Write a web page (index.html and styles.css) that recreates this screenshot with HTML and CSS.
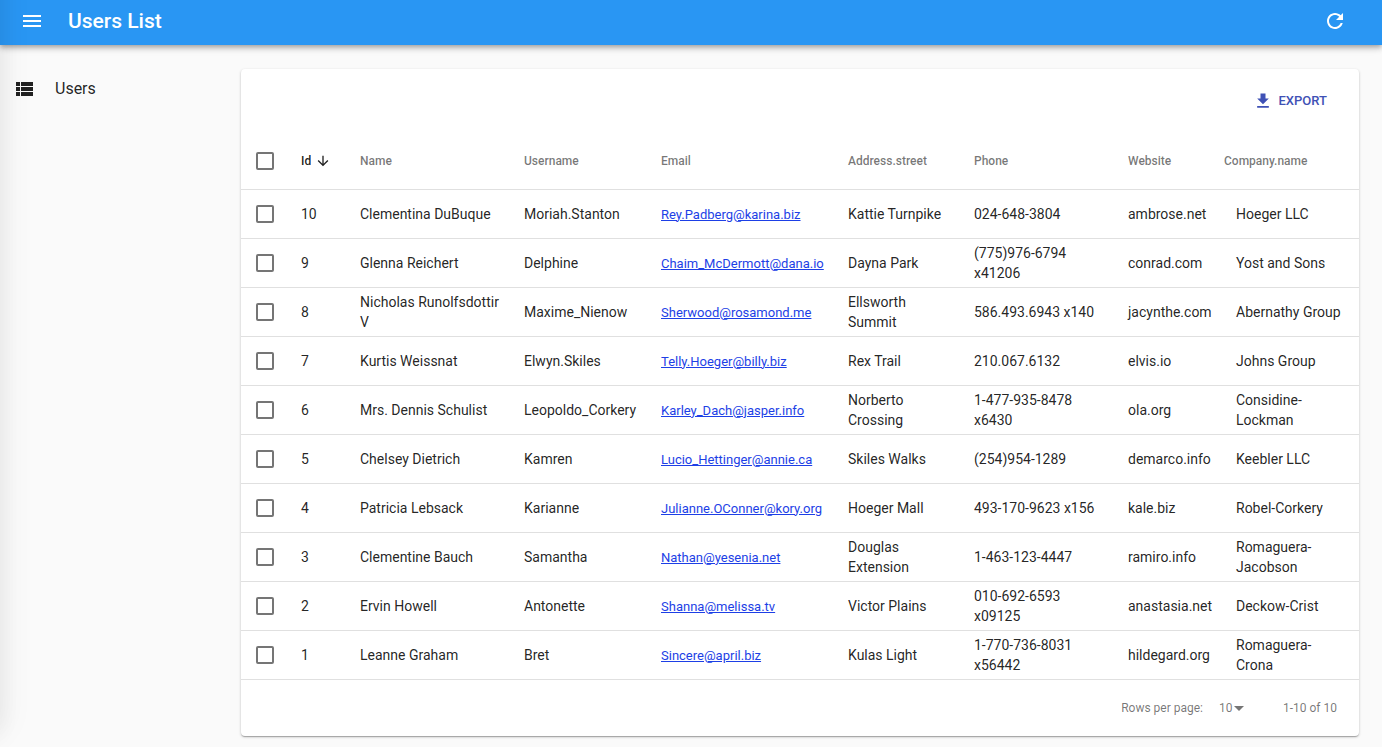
FILE: index.html
```html
<!DOCTYPE html>
<html lang="en">
<head>
<meta charset="utf-8">
<meta name="viewport" content="width=device-width, initial-scale=1">
<title>Users List</title>
<link rel="stylesheet" href="styles.css">
</head>
<body>
<div class="drawer-edge"></div>
<header class="app-bar">
  <button class="icon-button" type="button" aria-label="Open menu">
    <svg class="icon" viewBox="0 0 24 24"><path d="M3 18h18v-2H3v2zm0-5h18v-2H3v2zm0-7v2h18V6H3z"/></svg>
  </button>
  <h1 class="title">Users List</h1>
  <button class="icon-button" type="button" aria-label="Refresh">
    <svg class="icon" viewBox="0 0 24 24"><path d="M17.65 6.35C16.2 4.9 14.21 4 12 4c-4.42 0-7.99 3.58-7.99 8s3.57 8 7.99 8c3.73 0 6.84-2.55 7.73-6h-2.08c-.82 2.33-3.04 4-5.65 4-3.31 0-6-2.69-6-6s2.69-6 6-6c1.66 0 3.14.69 4.22 1.78L13 11h7V4l-2.35 2.35z"/></svg>
  </button>
</header>
<div class="layout">
  <nav class="sidebar">
    <a class="menu-item" href="#users">
      <svg class="icon" viewBox="0 0 24 24"><path d="M4 14h4v-4H4v4zm0 5h4v-4H4v4zM4 9h4V5H4v4zm5 5h12v-4H9v4zm0 5h12v-4H9v4zM9 5v4h12V5H9z"/></svg>
      <span>Users</span>
    </a>
  </nav>
  <main class="card">
    <div class="toolbar">
      <button class="export" type="button">
        <svg class="export-icon" viewBox="0 0 24 24"><path d="M19 9h-4V3H9v6H5l7 7 7-7zM5 18v2h14v-2H5z"/></svg>
        <span>EXPORT</span>
      </button>
    </div>
    <table class="grid">
      <colgroup>
        <col class="col-check"><col class="col-id"><col class="col-name"><col class="col-username"><col class="col-email"><col class="col-street"><col class="col-phone"><col class="col-website"><col class="col-company">
      </colgroup>
      <thead>
        <tr>
          <th class="check"><input type="checkbox" aria-label="Select all"></th>
          <th class="sorted" aria-sort="descending"><button class="sort" type="button">Id<svg class="sort-icon" viewBox="0 0 24 24"><path d="M20 12l-1.41-1.41L13 16.17V4h-2v12.17l-5.58-5.59L4 12l8 8 8-8z"/></svg></button></th>
          <th>Name</th><th>Username</th><th>Email</th><th>Address.street</th><th>Phone</th><th>Website</th><th class="company-head">Company.name</th>
        </tr>
      </thead>
      <tbody>
        <tr><td class="check"><input type="checkbox" aria-label="Select 10"></td><td>10</td><td>Clementina DuBuque</td><td>Moriah.Stanton</td><td><a href="mailto:Rey.Padberg@karina.biz">Rey.Padberg@karina.biz</a></td><td>Kattie Turnpike</td><td>024-648-3804</td><td>ambrose.net</td><td>Hoeger LLC</td></tr>
        <tr><td class="check"><input type="checkbox" aria-label="Select 9"></td><td>9</td><td>Glenna Reichert</td><td>Delphine</td><td><a href="mailto:Chaim_McDermott@dana.io">Chaim_McDermott@dana.io</a></td><td>Dayna Park</td><td>(775)976-6794 x41206</td><td>conrad.com</td><td>Yost and Sons</td></tr>
        <tr><td class="check"><input type="checkbox" aria-label="Select 8"></td><td>8</td><td>Nicholas Runolfsdottir V</td><td>Maxime_Nienow</td><td><a href="mailto:Sherwood@rosamond.me">Sherwood@rosamond.me</a></td><td>Ellsworth Summit</td><td>586.493.6943 x140</td><td>jacynthe.com</td><td>Abernathy Group</td></tr>
        <tr><td class="check"><input type="checkbox" aria-label="Select 7"></td><td>7</td><td>Kurtis Weissnat</td><td>Elwyn.Skiles</td><td><a href="mailto:Telly.Hoeger@billy.biz">Telly.Hoeger@billy.biz</a></td><td>Rex Trail</td><td>210.067.6132</td><td>elvis.io</td><td>Johns Group</td></tr>
        <tr><td class="check"><input type="checkbox" aria-label="Select 6"></td><td>6</td><td>Mrs. Dennis Schulist</td><td>Leopoldo_Corkery</td><td><a href="mailto:Karley_Dach@jasper.info">Karley_Dach@jasper.info</a></td><td>Norberto Crossing</td><td>1-477-935-8478 x6430</td><td>ola.org</td><td>Considine-Lockman</td></tr>
        <tr><td class="check"><input type="checkbox" aria-label="Select 5"></td><td>5</td><td>Chelsey Dietrich</td><td>Kamren</td><td><a href="mailto:Lucio_Hettinger@annie.ca">Lucio_Hettinger@annie.ca</a></td><td>Skiles Walks</td><td>(254)954-1289</td><td>demarco.info</td><td>Keebler LLC</td></tr>
        <tr><td class="check"><input type="checkbox" aria-label="Select 4"></td><td>4</td><td>Patricia Lebsack</td><td>Karianne</td><td><a href="mailto:Julianne.OConner@kory.org">Julianne.OConner@kory.org</a></td><td>Hoeger Mall</td><td>493-170-9623 x156</td><td>kale.biz</td><td>Robel-Corkery</td></tr>
        <tr><td class="check"><input type="checkbox" aria-label="Select 3"></td><td>3</td><td>Clementine Bauch</td><td>Samantha</td><td><a href="mailto:Nathan@yesenia.net">Nathan@yesenia.net</a></td><td>Douglas Extension</td><td>1-463-123-4447</td><td>ramiro.info</td><td>Romaguera-Jacobson</td></tr>
        <tr><td class="check"><input type="checkbox" aria-label="Select 2"></td><td>2</td><td>Ervin Howell</td><td>Antonette</td><td><a href="mailto:Shanna@melissa.tv">Shanna@melissa.tv</a></td><td>Victor Plains</td><td>010-692-6593 x09125</td><td>anastasia.net</td><td>Deckow-Crist</td></tr>
        <tr><td class="check"><input type="checkbox" aria-label="Select 1"></td><td>1</td><td>Leanne Graham</td><td>Bret</td><td><a href="mailto:Sincere@april.biz">Sincere@april.biz</a></td><td>Kulas Light</td><td>1-770-736-8031 x56442</td><td>hildegard.org</td><td>Romaguera-Crona</td></tr>
      </tbody>
    </table>
    <footer class="pagination">
      <label for="rows">Rows per page:</label>
      <span class="select-box">
        <select id="rows"><option>10</option><option>25</option><option>50</option></select>
        <svg class="caret" viewBox="0 0 10 5"><path d="M0 0h10L5 5z"/></svg>
      </span>
      <span>1-10 of 10</span>
    </footer>
  </main>
</div>
</body>
</html>
```
FILE: styles.css
```css
* { box-sizing: border-box; }

body {
  margin: 0;
  min-height: 100vh;
  background: #fafafa;
  color: rgba(0, 0, 0, 0.87);
  font: 14px/20px Roboto, sans-serif;
}

button {
  border: 0;
  padding: 0;
  background: none;
  color: inherit;
  font: inherit;
  cursor: pointer;
}

svg { display: block; fill: currentColor; }

.icon { width: 24px; height: 24px; }

/* Shadow cast by the closed drawer just outside the window */
.drawer-edge {
  position: fixed;
  z-index: 3;
  top: -60px;
  bottom: 28px;
  left: -240px;
  width: 240px;
  pointer-events: none;
  box-shadow: 0 16px 24px 2px rgba(0, 0, 0, 0.06), 0 6px 30px 5px rgba(0, 0, 0, 0.05);
}

.app-bar {
  position: relative;
  z-index: 2;
  display: flex;
  align-items: center;
  height: 45px;
  padding: 0 35px 3px 20px;
  background: #2996f3;
  color: #fff;
  box-shadow: 0 2px 4px -1px rgba(0, 0, 0, 0.2), 0 4px 5px 0 rgba(0, 0, 0, 0.14), 0 1px 10px 0 rgba(0, 0, 0, 0.12);
}

.title {
  flex: 1;
  margin: 0 0 0 24px;
  font-size: 21px;
  font-weight: 500;
  line-height: 24px;
}

.layout {
  display: flex;
  align-items: flex-start;
  padding: 24px 23px 8px 0;
}

.sidebar { flex: 0 0 241px; }

.menu-item {
  display: flex;
  align-items: center;
  gap: 19px;
  padding: 8px 12px;
  color: inherit;
  font-size: 16px;
  line-height: 24px;
  text-decoration: none;
}

.card {
  flex: 1;
  min-width: 0;
  background: #fff;
  border-radius: 4px;
  box-shadow: 0 1px 3px 0 rgba(0, 0, 0, 0.2), 0 1px 1px 0 rgba(0, 0, 0, 0.14), 0 2px 1px -1px rgba(0, 0, 0, 0.12);
}

.toolbar {
  display: flex;
  justify-content: flex-end;
  align-items: center;
  height: 63px;
  padding: 0 32px;
}

.export {
  display: flex;
  align-items: center;
  gap: 6px;
  color: #3f51b5;
  font-size: 13px;
  font-weight: 500;
}

.export-icon { width: 20px; height: 20px; }

.grid {
  width: 100%;
  table-layout: fixed;
  border-collapse: separate;
  border-spacing: 0;
}

.col-check { width: 48px; }
.col-id { width: 59px; }
.col-name { width: 164px; }
.col-username { width: 137px; }
.col-email { width: 187px; }
.col-street { width: 126px; }
.col-phone { width: 154px; }
.col-website { width: 108px; }
.col-company { width: 135px; }

th, td {
  padding: 0 12px;
  border-bottom: 1px solid #e0e0e0;
  text-align: left;
  vertical-align: middle;
}

th {
  height: 58px;
  color: rgba(0, 0, 0, 0.54);
  font-size: 12px;
  font-weight: 500;
}

td { height: 49px; }

.sorted { color: rgba(0, 0, 0, 0.87); }

.company-head { padding-left: 0; }

.check { padding: 0 15px; }

.check input {
  display: block;
  width: 18px;
  height: 18px;
  margin: 0;
  appearance: none;
  border: 2px solid #757575;
  border-radius: 2px;
}

.check input:checked { background: #3f51b5; border-color: #3f51b5; }

.sort { display: flex; align-items: center; gap: 4px; }

.sort-icon { width: 16px; height: 16px; }

td a {
  color: #1d3fe6;
  font-size: 13px;
}

.pagination {
  display: flex;
  justify-content: flex-end;
  align-items: center;
  height: 56px;
  padding: 0 22px;
  color: rgba(0, 0, 0, 0.54);
  font-size: 12px;
}

.select-box {
  display: flex;
  align-items: center;
  margin: 0 39px 0 16px;
}

.select-box select {
  width: 15px;
  height: 20px;
  margin: 0;
  padding: 0;
  appearance: none;
  border: 0;
  background: none;
  color: inherit;
  font: inherit;
}

.caret { width: 10px; height: 5px; }
```
